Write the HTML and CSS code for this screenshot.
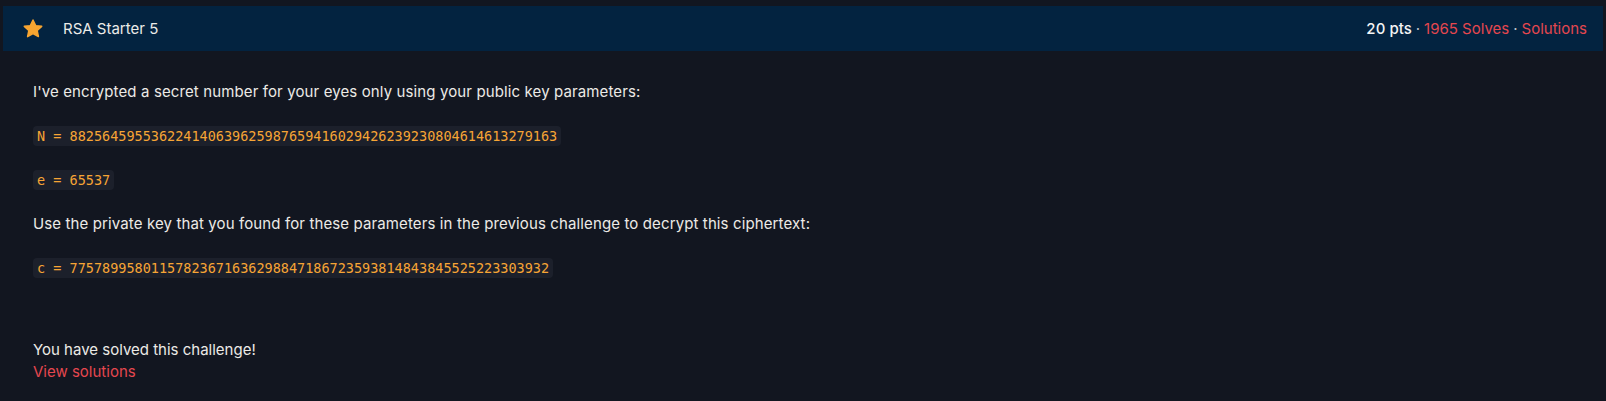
FILE: index.html
```html
<!DOCTYPE html>
<html>
<head>
<meta charset="utf-8">
<link rel="stylesheet" href="styles.css">
</head>
<body>
<div class="card">
  <div class="card-header">
    <div class="title">
      <svg class="star" viewBox="0 0 24 24" width="22" height="22"><path d="M12 2.2l2.9 6.1 6.6.8-4.9 4.6 1.3 6.6L12 17l-5.9 3.3 1.3-6.6-4.9-4.6 6.6-.8z" fill="#f7a531" stroke="#f7a531" stroke-width="1.6" stroke-linejoin="round"/></svg>
      <span class="name">RSA Starter 5</span>
    </div>
    <div class="meta">
      <span class="pts">20 pts</span>
      <span class="dot">·</span>
      <a class="red">1965 Solves</a>
      <span class="dot">·</span>
      <a class="red">Solutions</a>
    </div>
  </div>
  <div class="card-body">
    <div class="desc">
      <p>I've encrypted a secret number for your eyes only using your public key parameters:</p>
      <p><code>N = 882564595536224140639625987659416029426239230804614613279163</code></p>
      <p><code>e = 65537</code></p>
      <p>Use the private key that you found for these parameters in the previous challenge to decrypt this ciphertext:</p>
      <p class="last"><code>c = 77578995801157823671636298847186723593814843845525223303932</code></p>
    </div>
    <div class="solved">
      <div>You have solved this challenge!</div>
      <a class="red">View solutions</a>
    </div>
  </div>
</div>
</body>
</html>
```
FILE: styles.css
```css
html, body {
  margin: 0;
  padding: 0;
  background: #121620;
}
body {
  font-family: Inter, "Noto Sans", sans-serif;
  font-size: 15px;
  color: #eceae6;
}
.card {
  margin: 6px 3px 0 3px;
}
.card-header {
  height: 45px;
  background: #032340;
  display: flex;
  align-items: center;
  justify-content: space-between;
  padding: 0 16px 0 19px;
}
.title {
  display: flex;
  align-items: center;
}
.star {
  display: block;
}
.name {
  margin-left: 19px;
  font-size: 15px;
  color: #ecebe8;
}
.meta {
  display: flex;
  align-items: center;
  gap: 4px;
  font-size: 15px;
}
.pts {
  font-weight: 500;
  font-variant-numeric: tabular-nums;
  color: #f4f4f4;
}
.dot {
  color: #bfc3c8;
}
.red {
  color: #e5474f;
}
.card-body {
  padding: 30px 30px 0 30px;
}
.desc p {
  margin: 0 0 22px 0;
  line-height: 22px;
  letter-spacing: 0.12px;
}
.desc p.last {
  margin-bottom: 0;
}
.desc {
  margin-bottom: 60px;
}
code {
  font-family: "DejaVu Sans Mono", monospace;
  font-size: 13.5px;
  letter-spacing: 0;
  color: #f7a535;
  background: #1c202b;
  padding: 2px 4px;
  border-radius: 4px;
}
.solved {
  line-height: 22px;
}
.solved a {
  display: block;
}
```
